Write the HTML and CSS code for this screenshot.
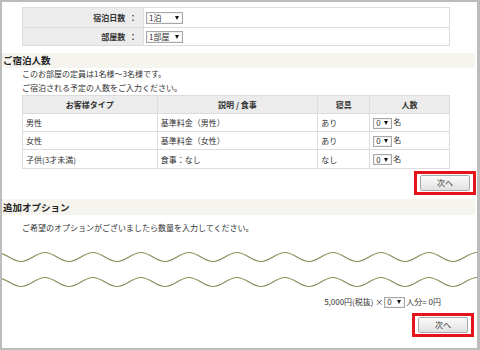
FILE: index.html
```html
<!DOCTYPE html>
<html lang="ja">
<head>
<meta charset="utf-8">
<link rel="stylesheet" href="styles.css">
</head>
<body>
<div class="frame">
  <table class="stay">
    <tr class="r1"><th>宿泊日数 ：</th><td><span class="sel w36">1泊<i class="arr"></i></span></td></tr>
    <tr class="r2"><th>部屋数 ：</th><td><span class="sel w36">1部屋<i class="arr"></i></span></td></tr>
  </table>

  <h2 class="sec">ご宿泊人数</h2>
  <p class="note">このお部屋の定員は1名様～3名様です。<br>ご宿泊される予定の人数をご入力ください。</p>

  <table class="guests">
    <colgroup><col class="c1"><col class="c2"><col class="c3"><col class="c4"></colgroup>
    <tr><th>お客様タイプ</th><th>説明 / 食事</th><th>寝具</th><th>人数</th></tr>
    <tr><td>男性</td><td>基準料金（男性）</td><td>あり</td><td><span class="sel w19">0<i class="arr"></i></span>名</td></tr>
    <tr><td>女性</td><td>基準料金（女性）</td><td>あり</td><td><span class="sel w19">0<i class="arr"></i></span>名</td></tr>
    <tr><td>子供(3才未満)</td><td>食事：なし</td><td>なし</td><td><span class="sel w19">0<i class="arr"></i></span>名</td></tr>
  </table>

  <div class="actions a1"><div class="mark"><button class="next">次へ</button></div></div>

  <h2 class="sec s2">追加オプション</h2>
  <p class="note n2">ご希望のオプションがございましたら数量を入力してください。</p>

  <svg class="waves" width="475" height="56" viewBox="0 0 475 56">
    <path id="wv" d="M-5,17.5 c8.7,0 15.3,9 24,9 s15.3,-9 24,-9 s15.3,9 24,9 s15.3,-9 24,-9 s15.3,9 24,9 s15.3,-9 24,-9 s15.3,9 24,9 s15.3,-9 24,-9 s15.3,9 24,9 s15.3,-9 24,-9 s15.3,9 24,9 s15.3,-9 24,-9 s15.3,9 24,9 s15.3,-9 24,-9 s15.3,9 24,9 s15.3,-9 24,-9 s15.3,9 24,9 s15.3,-9 24,-9 s15.3,9 24,9 s15.3,-9 24,-9 s15.3,9 24,9" fill="none" stroke="#8c8b57" stroke-width="1.2"/>
    <use href="#wv" y="25"/>
  </svg>

  <div class="price">5,000円(税抜) ×<span class="sel w21">0<i class="arr"></i></span>人分= 0円</div>

  <div class="actions a2"><div class="mark"><button class="next">次へ</button></div></div>
</div>
</body>
</html>
```

FILE: styles.css
```css
* { box-sizing: border-box; }
html, body { margin: 0; padding: 0; background: #fff; }
body {
  font-family: "Noto Sans CJK JP", "Noto Sans", sans-serif;
  font-size: 8px;
  color: #333;
}
.frame {
  width: 480px;
  height: 350px;
  border: 2px solid #bcbcbc;
  border-right-width: 3px;
  overflow: hidden;
  background: #fff;
}
table { border-collapse: collapse; }
.stay {
  margin: 5px 0 0 20px;
  width: 428px;
  border: 1px solid #dcdcdc;
}
.stay th, .stay td { border: 1px solid #dcdcdc; padding: 0; }
.stay th {
  width: 121px;
  background: #ececec;
  text-align: right;
  font-weight: bold;
  padding-right: 6px;
  word-spacing: 2px;
}
.stay td { padding-left: 2px; }
.stay .r1 th, .stay .r1 td { height: 20px; }
.stay .r2 th, .stay .r2 td { height: 18px; }

.sel {
  display: inline-flex;
  align-items: center;
  justify-content: space-between;
  height: 12px;
  border: 1px solid #a8a8a8;
  background: #fff;
  padding: 0 3px 0 2px;
  vertical-align: middle;
  line-height: 10px;
  box-shadow: inset 0 0 0 1px #f0f0f0;
}
.w36 { width: 37px; }
.w19 { width: 19px; height: 11px; }
.w21 { width: 21px; height: 11px; margin: 0 1px; }
.arr {
  display: inline-block;
  width: 0; height: 0;
  border-left: 2.5px solid transparent;
  border-right: 2.5px solid transparent;
  border-top: 4px solid #111;
}

.sec {
  margin: 7px 2px 0 0;
  height: 15px;
  line-height: 15px;
  background: #f5f4ee;
  font-size: 9.5px;
  font-weight: bold;
  padding-left: 1px;
  color: #222;
}
.note {
  margin: -1px 0 0 20px;
  line-height: 14px;
}

.guests {
  margin: 0 0 0 20px;
  width: 428px;
  border: 1px solid #dcdcdc;
}
.guests col.c1 { width: 135px; }
.guests col.c2 { width: 161px; }
.guests col.c3 { width: 52px; }
.guests col.c4 { width: 80px; }
.guests th, .guests td {
  border: 1px solid #dcdcdc;
  height: 18px;
  padding: 0 0 0 3px;
  text-align: left;
}
.guests th {
  background: #ececec;
  font-weight: bold;
  text-align: center;
  padding: 0;
}
.guests tr:last-child td { height: 19px; }
.guests td:last-child { padding-left: 3px; }
.guests td:last-child .sel { margin-right: 1px; }

.actions {
  display: flex;
  justify-content: flex-end;
  margin-right: 1px;
}
.a1 { margin-top: 2px; }
.a2 { margin-top: 4px; margin-right: 3px; }
.mark {
  border: 3px solid #e5141b;
  padding: 1px 3px 1px 3px;
}
.next {
  display: block;
  width: 50px;
  height: 16px;
  margin: 0;
  padding: 0;
  border: 1px solid #a9a9a9;
  border-radius: 2px;
  background: linear-gradient(#fbfbfb, #e1e1e1);
  font-family: inherit;
  font-size: 8px;
  color: #333;
  line-height: 14px;
}

.s2 { margin-top: 4px; height: 16px; line-height: 16px; }
.n2 { margin-top: 6px; line-height: 14px; }
.waves { display: block; }
.price {
  margin-top: 4px;
  margin-right: 36px;
  line-height: 14px;
  display: flex;
  justify-content: flex-end;
  align-items: center;
}
```
